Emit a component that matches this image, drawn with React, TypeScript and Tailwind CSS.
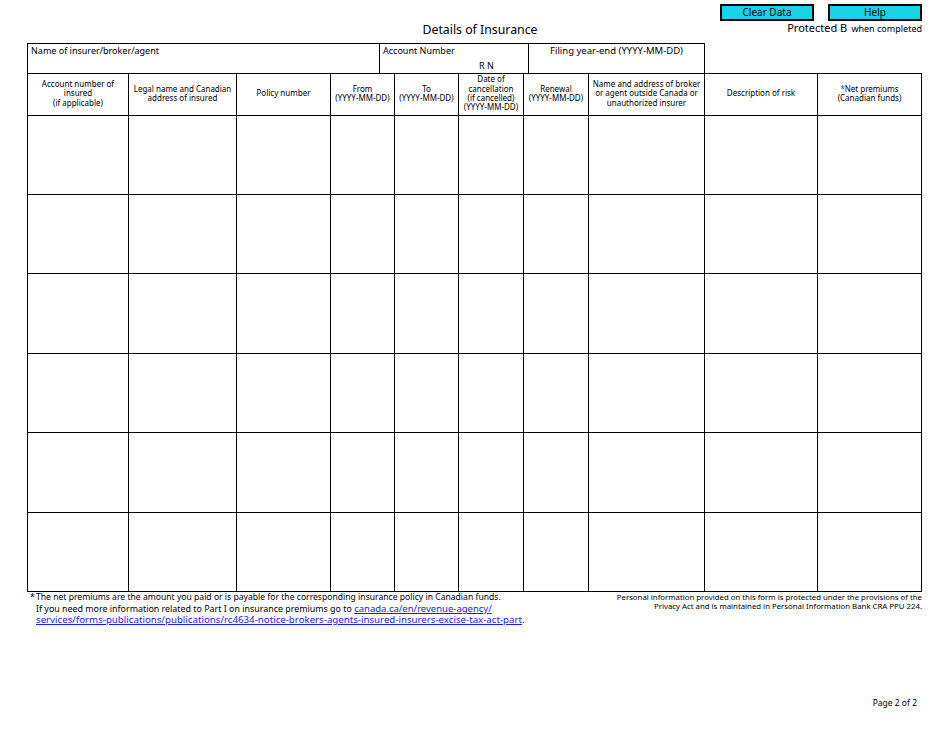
const COLS = [
  { w: 101, label: ["Account number of", "insured", "(if applicable)"] },
  { w: 108, label: ["Legal name and Canadian", "address of insured"] },
  { w: 94, label: ["Policy number"] },
  { w: 64, label: ["From", "(YYYY-MM-DD)"] },
  { w: 64, label: ["To", "(YYYY-MM-DD)"] },
  { w: 65, label: ["Date of", "cancellation", "(if cancelled)", "(YYYY-MM-DD)"] },
  { w: 65, label: ["Renewal", "(YYYY-MM-DD)"] },
  { w: 116, label: ["Name and address of broker", "or agent outside Canada or", "unauthorized insurer"] },
  { w: 113, label: ["Description of risk"] },
  { w: 104, label: ["Net premiums", "(Canadian funds)"], star: true },
]

const ROWS = [79, 79, 80, 79, 80, 79]

export default function App() {
  return (
    <div
      className="relative w-[950px] h-[735px] bg-white text-black"
      style={{ fontFamily: '"Noto Sans", "Open Sans", sans-serif' }}
    >
      <div className="pl-[27px] pr-[28px]">
        {/* buttons */}
        <div className="flex justify-end gap-[14px] pt-[4px] h-[21px]">
          <button
            type="button"
            className="w-[94px] h-[17px] border-2 border-black bg-[#17d3e6] text-[10px] leading-[13px]"
          >
            Clear Data
          </button>
          <button
            type="button"
            className="w-[94px] h-[17px] border-2 border-black bg-[#17d3e6] text-[10px] leading-[13px]"
          >
            Help
          </button>
        </div>

        {/* title row */}
        <div className="flex h-[22px]">
          <div className="w-[353px]" />
          <div className="w-[200px] text-center text-[12.3px] leading-[16px] pt-[1px]">Details of Insurance</div>
          <div className="flex-1 text-right leading-[12px] -mt-[1px]">
            <span className="text-[11px]">Protected B</span>{" "}
            <span className="text-[9px]">when completed</span>
          </div>
        </div>

        {/* top info row */}
        <div className="flex h-[30px] text-[9px] leading-[12px]">
          <div className="w-[353px] border border-black border-b-0 px-[3px] pt-[1px]">
            Name of insurer/broker/agent
          </div>
          <div className="w-[148px] border-t border-black border-b-0 px-[3px] pt-[1px] flex flex-col">
            <span>Account Number</span>
            <span className="pl-[96px] pt-[3px]">R N</span>
          </div>
          <div className="w-[177px] border border-black border-b-0 text-center text-[9.5px] pt-[1px]">
            Filing year-end (YYYY-MM-DD)
          </div>
        </div>

        {/* table */}
        <table className="border-collapse table-fixed w-[895px]">
          <colgroup>
            {COLS.map((c, i) => (
              <col key={i} style={{ width: c.w }} />
            ))}
          </colgroup>
          <thead>
            <tr className="h-[42px]">
              {COLS.map((c, i) => (
                <th
                  key={i}
                  className="border border-black p-0 pb-[3px] font-normal text-[8px] leading-[9.3px] text-center align-middle"
                >
                  {c.label.map((l, j) => (
                    <div key={j}>
                      {c.star && j === 0 && <span className="text-[#1a35e0]">*</span>}
                      {l}
                    </div>
                  ))}
                </th>
              ))}
            </tr>
          </thead>
          <tbody>
            {ROWS.map((h, r) => (
              <tr key={r} style={{ height: h }}>
                {COLS.map((_, i) => (
                  <td key={i} className="border border-black p-0" />
                ))}
              </tr>
            ))}
          </tbody>
        </table>

        {/* footer notes */}
        <div className="flex justify-between">
          <div className="leading-[11px] pl-[3px]">
            <div className="text-[8.6px]">
              <span className="inline-block w-[6px]">*</span>The net premiums are the amount you paid or is payable
              for the corresponding insurance policy in Canadian funds.
            </div>
            <div className="pl-[6px] text-[8.9px]">
              If you need more information related to Part I on insurance premiums go to{" "}
              <a href="#" className="text-[#1a1aff] underline text-[9.5px]">
                canada.ca/en/revenue-agency/
              </a>
            </div>
            <div className="pl-[6px] text-[9.7px]">
              <a href="#" className="text-[#1a1aff] underline">
                services/forms-publications/publications/rc4634-notice-brokers-agents-insured-insurers-excise-tax-act-part
              </a>
              .
            </div>
          </div>
          <div className="text-[7.8px] leading-[9px] text-right pt-[1px]">
            <div>Personal information provided on this form is protected under the provisions of the</div>
            <div>Privacy Act and is maintained in Personal Information Bank CRA PPU 224.</div>
          </div>
        </div>

        <div className="text-right text-[8.5px] leading-[10px] pr-[5px] mt-[73px]">Page 2 of 2</div>
      </div>
    </div>
  )
}
